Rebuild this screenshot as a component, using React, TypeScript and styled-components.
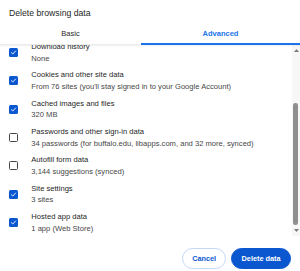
import React from "react";
import styled, { createGlobalStyle } from "styled-components";

const Global = createGlobalStyle`
  html, body { margin: 0; padding: 0; background: #fff; }
  body { font-family: "Liberation Sans", Arial, sans-serif; -webkit-font-smoothing: antialiased; }
  * { box-sizing: border-box; }
`;

const Dialog = styled.div`
  width: 300px;
  height: 271px;
  background: #fff;
  display: flex;
  flex-direction: column;
  overflow: hidden;
`;

const Title = styled.h1`
  margin: 0;
  height: 19px;
  padding: 7px 9px 0;
  font-size: 8.7px;
  line-height: 12px;
  font-weight: 400;
  color: #1f1f1f;
`;

const TabBar = styled.div`
  display: flex;
  height: 26px;
  border-bottom: 1px solid #ececec;
  box-shadow: 0 1px 2px rgba(0, 0, 0, 0.07);
  position: relative;
  z-index: 2;
`;

const Tab = styled.div<{ $active?: boolean; $basis?: number }>`
  flex: ${(p) => (p.$basis ? `0 0 ${p.$basis}px` : "1 1 auto")};
  position: relative;
  text-align: center;
  padding-top: 9px;
  font-size: 7.5px;
  line-height: 12px;
  color: ${(p) => (p.$active ? "#1a73e8" : "#1f1f1f")};
  font-weight: ${(p) => (p.$active ? 600 : 400)};
  &::after {
    content: "";
    position: absolute;
    left: 0;
    right: 0;
    bottom: -1px;
    height: 2px;
    background: ${(p) => (p.$active ? "#1a73e8" : "transparent")};
  }
`;

const ScrollArea = styled.div`
  flex: 1 1 auto;
  position: relative;
  overflow: hidden;
`;

const List = styled.div`
  display: flex;
  flex-direction: column;
  margin-top: -3.5px;
`;

const Row = styled.div`
  display: flex;
  align-items: center;
  gap: 13.5px;
  padding: 0 0 5.33px 9px;
`;

const Box = styled.span<{ $checked: boolean }>`
  flex: 0 0 auto;
  width: 8.8px;
  height: 8.8px;
  border-radius: 1.5px;
  display: flex;
  align-items: center;
  justify-content: center;
  background: ${(p) => (p.$checked ? "#0b57d0" : "#fff")};
  border: ${(p) => (p.$checked ? "none" : "1.2px solid #474747")};
`;

const TextBlock = styled.div`
  display: flex;
  flex-direction: column;
`;

const Label = styled.div`
  font-size: 7.6px;
  line-height: 11.5px;
  color: #1f1f1f;
  white-space: nowrap;
`;

const Sub = styled.div`
  font-size: 7.6px;
  line-height: 11.5px;
  color: #474747;
  white-space: nowrap;
`;

const Track = styled.div`
  position: absolute;
  top: 0;
  right: 0;
  bottom: 0;
  width: 8px;
  background: #f7f7f7;
`;

const Arrow = styled.svg<{ $pos: "top" | "bottom" }>`
  position: absolute;
  left: 1.5px;
  ${(p) => (p.$pos === "top" ? "top: 4.5px;" : "bottom: 4px;")}
  width: 5px;
  height: 3px;
`;

const Thumb = styled.div`
  position: absolute;
  left: 1.4px;
  width: 4.6px;
  top: 58px;
  height: 122px;
  border-radius: 2.3px;
  background: #8f8f8f;
`;

const Footer = styled.div`
  flex: 0 0 35px;
  display: flex;
  justify-content: flex-end;
  align-items: flex-start;
  gap: 5px;
  padding: 12px 9px 0;
`;

const Button = styled.button<{ $primary?: boolean }>`
  height: 20.5px;
  border-radius: 10.5px;
  padding: 0 ${(p) => (p.$primary ? 9.5 : 9)}px;
  font-family: "Liberation Sans", Arial, sans-serif;
  font-size: 7.3px;
  font-weight: 700;
  border: 1px solid ${(p) => (p.$primary ? "#0b57d0" : "#c4d7f8")};
  background: ${(p) => (p.$primary ? "#0b57d0" : "#fff")};
  color: ${(p) => (p.$primary ? "#fff" : "#0b57d0")};
  cursor: pointer;
`;

const items = [
  { label: "Download history", sub: "None", checked: true },
  { label: "Cookies and other site data", sub: "From 76 sites (you'll stay signed in to your Google Account)", checked: true },
  { label: "Cached images and files", sub: "320 MB", checked: true },
  { label: "Passwords and other sign-in data", sub: "34 passwords (for buffalo.edu, libapps.com, and 32 more, synced)", checked: false },
  { label: "Autofill form data", sub: "3,144 suggestions (synced)", checked: false },
  { label: "Site settings", sub: "3 sites", checked: true },
  { label: "Hosted app data", sub: "1 app (Web Store)", checked: true },
];

function Checkbox({ checked }: { checked: boolean }) {
  return (
    <Box $checked={checked}>
      {checked && (
        <svg width="7" height="7" viewBox="0 0 7 7">
          <path d="M1.4 3.7 L2.8 5 L5.6 2" fill="none" stroke="#fff" strokeWidth="0.9" strokeLinecap="round" strokeLinejoin="round" />
        </svg>
      )}
    </Box>
  );
}

export default function App() {
  return (
    <>
      <Global />
      <Dialog>
        <Title>Delete browsing data</Title>
        <TabBar>
          <Tab $basis={141}>Basic</Tab>
          <Tab $active>Advanced</Tab>
        </TabBar>
        <ScrollArea>
          <List>
            {items.map((it) => (
              <Row key={it.label}>
                <Checkbox checked={it.checked} />
                <TextBlock>
                  <Label>{it.label}</Label>
                  <Sub>{it.sub}</Sub>
                </TextBlock>
              </Row>
            ))}
          </List>
          <Track>
            <Arrow $pos="top" viewBox="0 0 5 3">
              <path d="M2.5 0 L5 3 L0 3 Z" fill="#7a7a7a" />
            </Arrow>
            <Thumb />
            <Arrow $pos="bottom" viewBox="0 0 5 3">
              <path d="M0 0 L5 0 L2.5 3 Z" fill="#7a7a7a" />
            </Arrow>
          </Track>
        </ScrollArea>
        <Footer>
          <Button>Cancel</Button>
          <Button $primary>Delete data</Button>
        </Footer>
      </Dialog>
    </>
  );
}
